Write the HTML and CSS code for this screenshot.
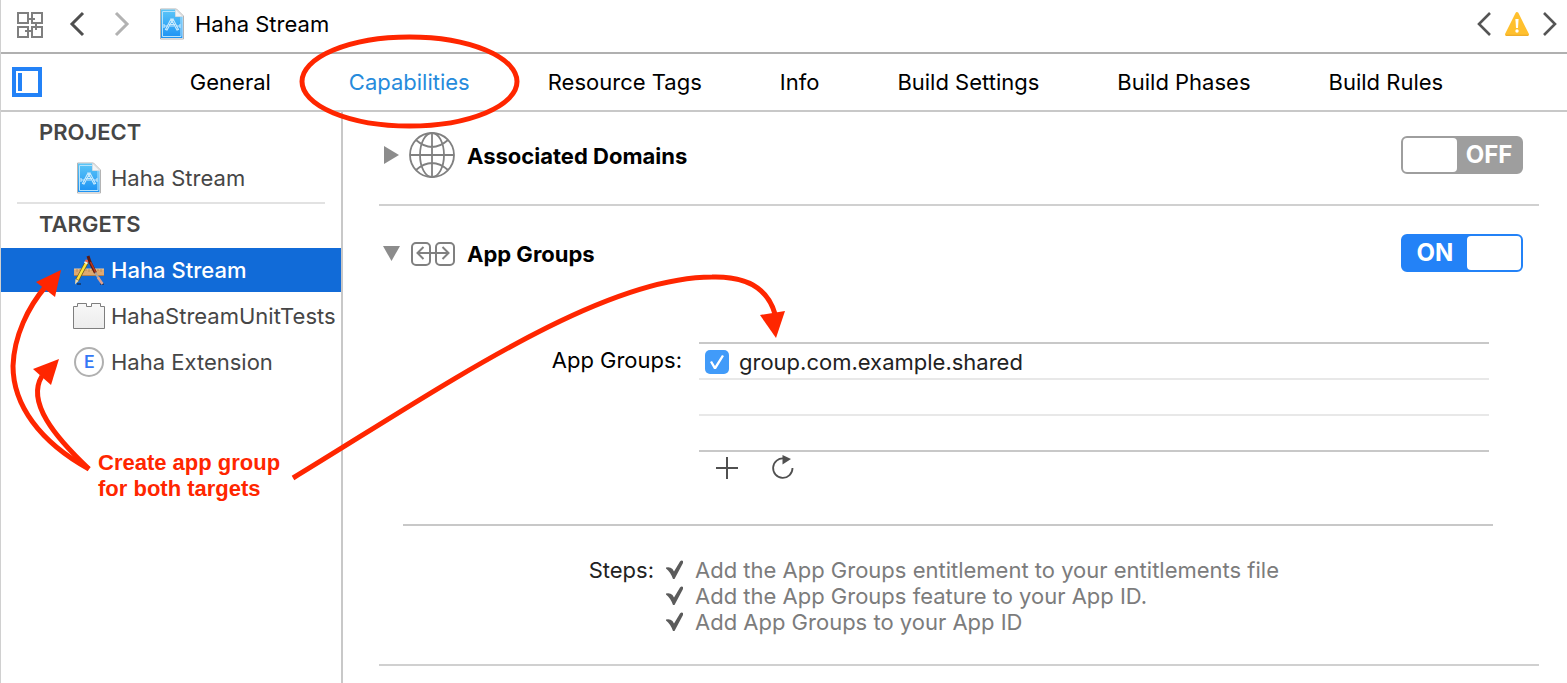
FILE: index.html
```html
<!DOCTYPE html>
<html lang="en">
<head>
<meta charset="utf-8">
<title>Haha Stream</title>
<link rel="stylesheet" href="styles.css">
</head>
<body>
<svg class="defs" aria-hidden="true">
  <defs>
    <linearGradient id="doc-fill" x1="0" y1="0" x2="0" y2="1">
      <stop offset="0" stop-color="#5cc6f7"/><stop offset="1" stop-color="#1c92f4"/>
    </linearGradient>
    <linearGradient id="brick-fill" x1="0" y1="0" x2="0" y2="1">
      <stop offset="0" stop-color="#f8f8f8"/><stop offset="1" stop-color="#ececec"/>
    </linearGradient>
    <symbol id="project-doc" viewBox="0 0 26 32">
      <path d="M1.500 1H17.500L24.500 8V31H1.500Z" fill="#fff" stroke="#b4b4b4" stroke-width="1"/>
      <path d="M2 1.500H16.500V8.500H23.500V30H2Z" fill="url(#doc-fill)"/>
      <path d="M16 3.500H3.500V28.500H22V9" fill="none" stroke="#b5e3fc" stroke-width="1"/>
      <path d="M16.500 1.500L23.500 8.500H16.500Z" fill="#f1f3f5" stroke="#d0d4d8" stroke-width=".6"/>
      <g fill="none" stroke="#c9eafd" stroke-width="1.100">
        <path d="M12 11H14L19.500 21.500L18 22ZM14 11H12L6.500 21.500L8 22Z"/>
        <path d="M5 18H9M11 18H15M17 18H21M5 16V20M21 16V20M9.500 16.500H16.500"/>
      </g>
    </symbol>
    <symbol id="tick" viewBox="0 0 18 20">
      <path d="M0 7.500Q4 6.500 6.500 9L8 11.500L14 1.500Q15.500 0 17 1V3L8.500 19H7Q4.500 12 0 8.500Z" fill="#5b5b5b"/>
    </symbol>
  </defs>
</svg>

<header class="jumpbar">
  <button class="icon-button" aria-label="Related items">
    <svg width="28" height="28" viewBox="0 0 28 28" fill="none" stroke="#7f7f7f" stroke-width="2">
      <path d="M1 3H11V13H1ZM15 3H25V13H15ZM1 17H11V27H1ZM15 17H25V27H15ZM12 9H18M19 14V20M8 21H14"/>
    </svg>
  </button>
  <button class="icon-button" aria-label="Back">
    <svg width="16" height="26" viewBox="0 0 16 26" fill="none" stroke="#4f4f4f" stroke-width="3"><path d="M14 2L3 13L14 24"/></svg>
  </button>
  <button class="icon-button" aria-label="Forward" disabled>
    <svg width="16" height="26" viewBox="0 0 16 26" fill="none" stroke="#b2b2b2" stroke-width="3"><path d="M2 2L13 13L2 24"/></svg>
  </button>
  <button class="crumb">
    <svg width="26" height="32"><use href="#project-doc"/></svg>
    <span>Haha Stream</span>
  </button>
  <div class="issues">
    <button class="icon-button" aria-label="Previous issue">
      <svg width="16" height="26" viewBox="0 0 16 26" fill="none" stroke="#555" stroke-width="2.600"><path d="M14 2L3 13L14 24"/></svg>
    </button>
    <button class="icon-button" aria-label="Warnings">
      <svg width="26" height="26" viewBox="0 0 26 26">
        <path d="M13 2.500L23.500 23.500H2.500Z" fill="#ffc02e" stroke="#ffc02e" stroke-width="3" stroke-linejoin="round"/>
        <path d="M2 24.300H24" stroke="#efae2c" stroke-width="1.400"/>
        <path d="M11.400 8H14.600L14 17H12Z" fill="#fff"/><circle cx="13" cy="20" r="1.700" fill="#fff"/>
      </svg>
    </button>
    <button class="icon-button" aria-label="Next issue">
      <svg width="16" height="26" viewBox="0 0 16 26" fill="none" stroke="#555" stroke-width="2.600"><path d="M2 2L13 13L2 24"/></svg>
    </button>
  </div>
</header>

<div class="tabbar">
  <button class="icon-button" aria-label="Toggle targets list">
    <svg width="30" height="30" viewBox="0 0 30 30"><path d="M2 2H28V28H2Z" fill="#fff" stroke="#2382f7" stroke-width="4"/><path d="M6 6H10V24H6Z" fill="#2382f7"/></svg>
  </button>
  <nav class="tabs">
    <a href="#general">General</a>
    <a href="#capabilities" class="current" aria-current="page">Capabilities</a>
    <a href="#tags">Resource Tags</a>
    <a href="#info">Info</a>
    <a href="#settings">Build Settings</a>
    <a href="#phases">Build Phases</a>
    <a href="#rules">Build Rules</a>
  </nav>
</div>

<div class="editor">
  <aside class="sidebar">
    <h2>PROJECT</h2>
    <a class="item" href="#project"><svg class="item-icon" width="26" height="32"><use href="#project-doc"/></svg>Haha Stream</a>
    <hr>
    <h2>TARGETS</h2>
    <a class="item selected" href="#app" aria-current="true">
      <svg class="item-icon" width="32" height="32" viewBox="0 0 32 32">
        <path d="M1 15H31V21.500H1Z" fill="#dfa970"/><path d="M1 15H31" stroke="#f0cda0"/><path d="M1 21.500H31" stroke="#b5804a"/>
        <path d="M4 15V18M7 15V17M10 15V18M13 15V17M16 15V18M19 15V17M22 15V18M25 15V17M28 15V18" stroke="#b5854f" stroke-width=".8"/>
        <path d="M4 30H8M27 30H31" stroke="#16345f" stroke-width="1.300"/>
        <path d="M14 8L4 26.500" stroke="#6b5a1e" stroke-width="3.800"/><path d="M13.600 8.500L4.500 25.500" stroke="#ffe23d" stroke-width="2.600"/>
        <path d="M14.400 6L13.300 8" stroke="#f0604c" stroke-width="3.400"/><path d="M13.300 8L12.500 9.500" stroke="#eee" stroke-width="3.400"/>
        <path d="M2.500 25L5.800 26.800L2 30.500Z" fill="#f2d9a4"/>
        <path d="M15 2L17 8L22.500 19" fill="none" stroke="#5d1a10" stroke-width="3"/><path d="M17.500 8L22.500 18" stroke="#b8371f" stroke-width="1.600"/>
        <path d="M22.300 18.500L26 25" stroke="#a9a3a3" stroke-width="2.200"/><path d="M25 23.500L29.500 30" stroke="#dfa08c" stroke-width="2.600"/>
      </svg>Haha Stream</a>
    <a class="item" href="#tests">
      <svg class="item-icon" width="32" height="28" viewBox="0 0 32 28">
        <path d="M.500 4.500H4.500V1.500H13.500V4.500H18.500V1.500H27.500V4.500H31.500V26.500H.500Z" fill="url(#brick-fill)" stroke="#7e7e7e"/>
      </svg>HahaStreamUnitTests</a>
    <a class="item" href="#extension"><span class="item-icon badge">E</span>Haha Extension</a>
  </aside>

  <main class="capabilities">
    <section class="capability compact">
      <header>
        <button class="disclosure" aria-label="Expand Associated Domains" aria-expanded="false">
          <svg width="20" height="20" viewBox="0 0 20 20"><path d="M1 1L16 10L1 19Z" fill="#8c8c8c"/></svg>
        </button>
        <svg width="48" height="48" viewBox="0 0 48 48" fill="none" stroke="#808080" stroke-width="1.800">
          <circle cx="24" cy="24" r="22"/><ellipse cx="24" cy="24" rx="12" ry="22"/>
          <path d="M24 2V46M2 24H46M8 9Q24 23 40 9M8 39Q24 25 40 39"/>
        </svg>
        <h3>Associated Domains</h3>
        <button class="switch" role="switch" aria-checked="false" aria-label="Associated Domains"><span class="knob"></span><span class="state">OFF</span></button>
      </header>
    </section>

    <section class="capability">
      <header>
        <button class="disclosure" aria-label="Collapse App Groups" aria-expanded="true">
          <svg width="20" height="20" viewBox="0 0 20 20"><path d="M0 3H17L8.500 18Z" fill="#8c8c8c"/></svg>
        </button>
        <svg width="48" height="48" viewBox="0 0 48 48" fill="none" stroke="#808080" stroke-width="2">
          <rect x="4" y="14" width="18" height="22" rx="4"/><rect x="28" y="14" width="18" height="22" rx="4"/>
          <path d="M9 24H41M15.500 18L9.500 24L15.500 30M34.500 18L40.500 24L34.500 30"/>
        </svg>
        <h3>App Groups</h3>
        <button class="switch on" role="switch" aria-checked="true" aria-label="App Groups"><span class="state">ON</span><span class="knob"></span></button>
      </header>

      <div class="groups">
        <div class="groups-label">App Groups:</div>
        <div>
          <ul class="group-list">
            <li><input type="checkbox" id="shared" checked><label for="shared">group.com.example.shared</label></li>
            <li></li>
            <li></li>
          </ul>
          <div class="group-actions">
            <button class="icon-button" aria-label="Add group">
              <svg width="24" height="24" viewBox="0 0 24 24" stroke="#505050" stroke-width="2"><path d="M1 12H23M12 1V23"/></svg>
            </button>
            <button class="icon-button" aria-label="Refresh">
              <svg width="24" height="24" viewBox="0 0 24 24"><path d="M13 2.500A9.700 9.700 0 1 0 21.500 12" fill="none" stroke="#505050" stroke-width="1.800"/><path d="M11.500 -1L20 3L11.500 8.500Z" fill="#505050"/></svg>
            </button>
          </div>
        </div>
      </div>

      <div class="steps">
        <div class="steps-label">Steps:</div>
        <ul>
          <li><svg width="18" height="20"><use href="#tick"/></svg>Add the App Groups entitlement to your entitlements file</li>
          <li><svg width="18" height="20"><use href="#tick"/></svg>Add the App Groups feature to your App ID.</li>
          <li><svg width="18" height="20"><use href="#tick"/></svg>Add App Groups to your App ID</li>
        </ul>
      </div>
    </section>
  </main>
</div>

<svg class="markup" width="800" height="520" viewBox="0 0 800 520" fill="none" stroke="#ff2600" stroke-width="5" aria-hidden="true">
  <ellipse cx="409.500" cy="81.500" rx="107.500" ry="44.500"/>
  <path d="M89 469C40 442 13 405 13 366C14 336 28 307 46 286"/>
  <path d="M89 469C55 437 26 402 42 376"/>
  <path d="M293 478C441 388 600 277 712 277C748 276 768 289 775 314"/>
  <g fill="#ff2600" stroke="none">
    <path d="M61 270L36 282L55 297Z"/>
    <path d="M59 359L33 369L51 385Z"/>
    <path d="M776 338L760 315L785 311Z"/>
  </g>
</svg>
<p class="note">Create app group<br>for both targets</p>
</body>
</html>
```
FILE: styles.css
```css
* {
  box-sizing: border-box;
}

body {
  position: relative;
  display: flex;
  flex-direction: column;
  min-height: 100vh;
  margin: 0;
  border-left: 1px solid #d0d0d0;
  background: #fff;
  color: #000;
  font: 22px/26px Inter, "Liberation Sans", sans-serif;
}

button {
  margin: 0;
  padding: 0;
  border: 0;
  background: none;
  color: inherit;
  font: inherit;
}

a {
  color: inherit;
  text-decoration: none;
}

h2,
h3,
p,
ul {
  margin: 0;
  padding: 0;
  font-size: 22px;
}

ul {
  list-style: none;
}

svg {
  display: block;
  flex: none;
  overflow: visible;
}

.defs {
  position: absolute;
  width: 0;
  height: 0;
}

.icon-button {
  display: flex;
}

.jumpbar {
  display: flex;
  align-items: center;
  height: 54px;
  padding: 0 9px 4px 16px;
  border-bottom: 2px solid #b0b0b0;
}

.jumpbar > .icon-button {
  margin-right: 24px;
}

.jumpbar > .icon-button + .icon-button {
  margin-right: 29px;
}

.crumb {
  display: flex;
  align-items: center;
  gap: 10px;
  margin-right: auto;
}

.issues {
  display: flex;
  align-items: center;
  gap: 12px;
}

.tabbar {
  display: flex;
  align-items: center;
  height: 58px;
  padding-left: 11px;
  border-bottom: 2px solid #c8c8c8;
}

.tabs {
  display: flex;
  flex: 1;
  justify-content: center;
  gap: 78px;
  margin-left: 24px;
  white-space: nowrap;
}

.current {
  color: #268bdc;
}

.editor {
  display: flex;
  flex: 1;
}

.sidebar {
  flex: none;
  width: 342px;
  border-right: 2px solid #c8c8c8;
  color: #464646;
}

.sidebar h2 {
  height: 42px;
  padding: 7px 0 0 38px;
  font-weight: 600;
}

.sidebar hr {
  height: 2px;
  margin: 0 16px;
  border: 0;
  background: #e2e2e2;
}

.item {
  display: grid;
  grid-template-columns: 32px 1fr;
  align-items: center;
  gap: 6px;
  height: 44px;
  margin: 2px 0;
  padding-left: 72px;
  white-space: nowrap;
}

.item-icon {
  justify-self: center;
}

.item.selected {
  background: #116bd8;
  color: #fff;
  font-weight: 500;
}

.badge {
  width: 30px;
  height: 30px;
  border: 2px solid #b0b0b0;
  border-radius: 50%;
  color: #3478f6;
  font: 500 18px/26px Roboto, sans-serif;
  text-align: center;
}

.capabilities {
  flex: 1;
  padding: 0 28px 16px 36px;
}

.capability {
  padding: 23px 0 29px;
  border-bottom: 2px solid #d0d0d0;
}

.capability.compact {
  padding: 19px 0 25px;
}

.capability header {
  display: flex;
  align-items: center;
  padding: 0 16px 0 4px;
}

.capability h3 {
  flex: 1;
  margin-left: 11px;
  padding-top: 2px;
  font-weight: 700;
}

.disclosure {
  margin-right: 5px;
}

.switch {
  display: flex;
  width: 122px;
  height: 38px;
  border: 2px solid #9e9e9e;
  border-radius: 6px;
  background: #9e9e9e;
  color: #fff;
  font-size: 24px;
  font-weight: 700;
  line-height: 34px;
}

.switch.on {
  border-color: #2382f7;
  background: #2382f7;
}

.knob {
  width: 54px;
  height: 34px;
  border-radius: 4px;
  background: #fff;
}

.state {
  flex: 1;
  text-align: center;
}

.groups {
  display: grid;
  grid-template-columns: 304px 1fr;
  gap: 16px;
  margin-top: 65px;
  padding-right: 50px;
}

.groups-label {
  padding: 5px 1px 0 0;
  text-align: right;
}

.group-list {
  border: solid #c8c8c8;
  border-width: 2px 0;
}

.group-list li {
  display: flex;
  align-items: center;
  gap: 10px;
  height: 36px;
  padding: 2px 0 0 6px;
  border-bottom: 2px solid #e8e8e8;
  color: #222;
}

.group-list li:last-child {
  height: 34px;
  border: 0;
}

.group-list input {
  width: 24px;
  height: 24px;
  margin: 0;
  border-radius: 5px;
  appearance: none;
  background: #419bf9;
}

.group-list input:checked::before {
  content: "";
  display: block;
  width: 24px;
  height: 24px;
  background: #fff;
  clip-path: polygon(5px 12px, 7px 11px, 10px 16px, 17px 5px, 19px 6px, 11px 19px, 9px 19px);
}

.group-actions {
  display: flex;
  gap: 32px;
  padding: 4px 16px;
}

.steps {
  display: grid;
  grid-template-columns: 251px 1fr;
  gap: 12px;
  margin: 40px 46px 0 24px;
  padding-top: 31px;
  border-top: 2px solid #c8c8c8;
}

.steps-label {
  color: #222;
  text-align: right;
}

.steps li {
  display: flex;
  align-items: center;
  gap: 11px;
  color: #7c7c7c;
}

.markup {
  position: absolute;
  top: 0;
  left: -1px;
  pointer-events: none;
}

.note {
  position: absolute;
  top: 450px;
  left: 97px;
  color: #ff2600;
  font: bold 22px/26px "Liberation Sans", Arial, sans-serif;
}
```
